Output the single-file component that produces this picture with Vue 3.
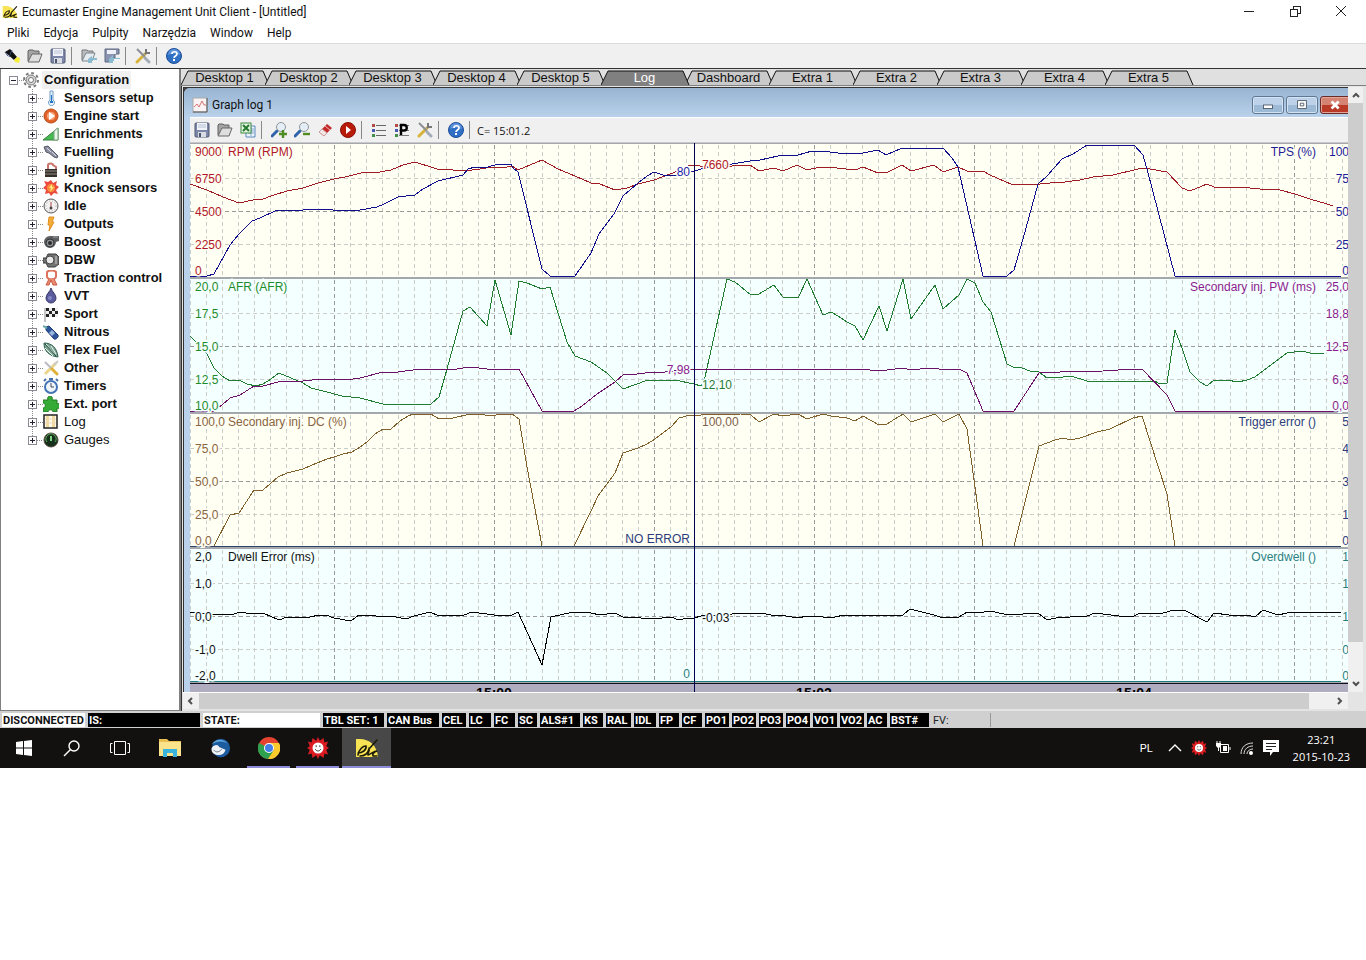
<template>
  <div class="app">
    <svg class="icon-defs" aria-hidden="true">
      <symbol id="i-logo" viewBox="0 0 24 20">
        <path d="M1 1h4c9 0 17 6 18 18H1z" fill="#f7e353" />
        <path d="M22 2l-8 9M3 17c1-6 5-9 8-9 1 4-4 7-8 7M5 18c5 0 8-3 9-7 1 2-2 5-1 6 3-1 6-4 9-4-3 1-5 3-4 5h4" fill="none" stroke="#1c1a08" stroke-width="1.6" stroke-linecap="round" />
      </symbol>
      <symbol id="i-torch" viewBox="0 0 16 16">
        <path d="M1 4l5-3 7 8-3 3z" fill="#111" />
        <path d="M1 4l3 4M8 2l-3 7" stroke="#334a77" />
        <path d="M13 9l-3 3 1 2 4 1 1-5z" fill="#f5ee35" />
      </symbol>
      <symbol id="i-open" viewBox="0 0 16 16">
        <path d="M1 13V3l1-1h4l1 1h5v3" fill="#a5a5a5" stroke="#606060" />
        <path d="M1 14L5 6h10l-3 8z" fill="#dedede" stroke="#666" stroke-linejoin="round" />
      </symbol>
      <symbol id="i-save" viewBox="0 0 16 16">
        <rect x="1" y="1" width="14" height="14" rx="1" fill="#7c86a8" stroke="#535a75" />
        <rect x="3" y="1" width="10" height="7" fill="#f1f3f8" />
        <path d="M4 3h8M4 5h8" stroke="#b8c3d8" />
        <rect x="4" y="10" width="8" height="5" fill="#d9dce2" />
        <rect x="5" y="11" width="2" height="4" fill="#4d5670" />
      </symbol>
      <symbol id="i-open-desk" viewBox="0 0 16 16">
        <path d="M1 12V2h5l1 1h5v3" fill="#b9bdc2" stroke="#777" />
        <path d="M1 13l4-8h9l-3 8z" fill="#e5ebee" stroke="#7b858b" />
        <path d="M7 15v-4l4-3v2h5v2h-5v3z" fill="#8bbbd0" />
      </symbol>
      <symbol id="i-save-desk" viewBox="0 0 16 16">
        <path d="M1 1h14v5h-4v4H8v4H1z" fill="#8a94b0" stroke="#5f6982" />
        <rect x="3" y="2" width="9" height="4" fill="#eef2f8" />
        <path d="M5 15v-4l4-4v3h7v3H9v2z" fill="#8bbbd0" />
        <path d="M10 11h6v2h-6z" fill="#f2f6f8" />
      </symbol>
      <symbol id="i-tools" viewBox="0 0 16 16">
        <path d="M2 14l8-8" stroke="#d8b43c" stroke-width="3" stroke-linecap="round" />
        <path d="M10 6l2-2M11 1v4h4" stroke="#777" stroke-width="2" fill="none" />
        <path d="M2 1l8 8" stroke="#8a8f96" stroke-width="2" />
        <path d="M10 10l4 4" stroke="#a3adb8" stroke-width="3" stroke-linecap="round" />
      </symbol>
      <symbol id="i-help" viewBox="0 0 16 16">
        <circle cx="8" cy="8" r="7.5" fill="#2f6fc4" stroke="#1f4f9a" />
        <path d="M2 7a6 6 0 0 1 12 0c-4-2-8-2-12 0z" fill="#5f93da" />
        <path d="M6 6c0-3 5-3 5 0 0 2-3 2-3 4" fill="none" stroke="#fff" stroke-width="1.7" />
        <rect x="7" y="11" width="2" height="2" fill="#fff" />
      </symbol>
      <symbol id="i-excel" viewBox="0 0 16 16">
        <path d="M6 4h9v11H6z" fill="#eef4fb" stroke="#5b87bf" />
        <path d="M8 7h6M8 9h6M8 11h6M11 5v9" stroke="#87a9d4" />
        <rect x="1" y="1" width="10" height="10" fill="#e4f3e2" stroke="#3f8a40" />
        <path d="M3 3l6 6M9 3L3 9" stroke="#247a2c" stroke-width="2" />
      </symbol>
      <symbol id="i-zoom-in" viewBox="0 0 16 16">
        <path d="M1 14l5-5" stroke="#2f62a8" stroke-width="3" stroke-linecap="round" />
        <circle cx="10" cy="5" r="4.5" fill="#e6eef5" stroke="#8d959c" />
        <path d="M12 8v8M8 12h8" stroke="#4f8c22" stroke-width="2.4" />
      </symbol>
      <symbol id="i-zoom-out" viewBox="0 0 16 16">
        <path d="M1 14l5-5" stroke="#2f62a8" stroke-width="3" stroke-linecap="round" />
        <circle cx="10" cy="5" r="4.5" fill="#e6eef5" stroke="#8d959c" />
        <path d="M9 12h7" stroke="#4f8c22" stroke-width="2.4" />
      </symbol>
      <symbol id="i-eraser" viewBox="0 0 16 16">
        <path d="M2 10l8-8 5 4-8 8z" fill="#c22a2a" />
        <path d="M2 10l3-3 5 4-3 3z" fill="#f5e8e8" stroke="#c99" />
        <path d="M8 4l5 4" stroke="#f0b8b8" />
      </symbol>
      <symbol id="i-record" viewBox="0 0 16 16">
        <circle cx="8" cy="8" r="7.5" fill="#b81b08" stroke="#8a1204" />
        <path d="M6 4l5 4-5 4z" fill="#fff" />
      </symbol>
      <symbol id="i-list" viewBox="0 0 16 16">
        <path d="M5 3.5h10M5 8.5h10M5 13.5h10" stroke="#666" />
        <path d="M1 2h3v3H1z" fill="#b34848" />
        <path d="M1 7h3v3H1z" fill="#4858b3" />
        <path d="M1 12h3v3H1z" fill="#3f8f4a" />
      </symbol>
      <symbol id="i-param" viewBox="0 0 16 16">
        <path d="M5 3.5h10M5 8.5h10M5 13.5h10" stroke="#777" />
        <path d="M1 2h3v3H1z" fill="#b34848" />
        <path d="M1 7h3v3H1z" fill="#4858b3" />
        <path d="M1 12h3v3H1z" fill="#3f8f4a" />
        <path d="M7 13V3h3a2.5 2.5 0 0 1 0 5.500H8" fill="none" stroke="#000" stroke-width="2.400" />
      </symbol>
      <symbol id="i-graph" viewBox="0 0 16 16">
        <rect x="1" y="1" width="14" height="14" fill="#fbf3f3" stroke="#aaa" />
        <path d="M15 1v14H1" fill="none" stroke="#555" />
        <path d="M2 10l3-3 2 3 3-6 2 4h2" fill="none" stroke="#d57474" />
      </symbol>
      <symbol id="i-gear" viewBox="0 0 16 16">
        <circle cx="8" cy="8" r="7" fill="none" stroke="#7b7b7b" stroke-width="2" stroke-dasharray="2.750 2.750" />
        <circle cx="8" cy="8" r="5" fill="#d6d6d6" stroke="#7b7b7b" />
        <circle cx="8" cy="8" r="2.500" fill="#fff" stroke="#777" />
      </symbol>
      <symbol id="i-thermo" viewBox="0 0 16 16">
        <path d="M7 1h3v9a3 3 0 1 1-3 0z" fill="#e6f2fc" stroke="#6a9cc8" />
        <path d="M8 5h1v6h1v2H7v-2h1z" fill="#2574c4" />
      </symbol>
      <symbol id="i-start" viewBox="0 0 16 16">
        <circle cx="8" cy="8" r="7" fill="#e2622a" stroke="#b94a18" />
        <circle cx="8" cy="8" r="4" fill="#f4a77d" />
        <path d="M6 4l6 4-6 4z" fill="#fff" />
      </symbol>
      <symbol id="i-enrich" viewBox="0 0 16 16">
        <path d="M0 14L15 2v12z" fill="#45bb50" stroke="#3b7a40" />
        <path d="M11 5l4-3v12h-4z" fill="#e9f5ea" stroke="#7aa07c" />
      </symbol>
      <symbol id="i-injector" viewBox="0 0 16 16">
        <path d="M1 3l4-1 10 10-1 2-3-1-5-4-3-1z" fill="#8c8fa0" stroke="#545868" />
        <path d="M4 4l4 4M9 8l4 4" stroke="#d5d8e4" />
      </symbol>
      <symbol id="i-coil" viewBox="0 0 16 16">
        <path d="M5 7V3c0-2 5-2 5 0l3 2v3" fill="none" stroke="#c9736b" stroke-width="2" />
        <path d="M2 7h12v8H2z" fill="#35302c" />
        <path d="M2 9h12M2 12h12" stroke="#8e897f" />
      </symbol>
      <symbol id="i-knock" viewBox="0 0 16 16">
        <path d="M8 0l2 3 4-2-1 4 3 2-3 3 2 4-4-1-3 3-2-3-4 1 1-4-3-2 3-3-2-4 4 1z" fill="#ec4a3c" />
        <circle cx="8" cy="8" r="4" fill="#f98d3c" />
        <path d="M9 4L6 8h2l-1 4 4-5H9z" fill="#ffec80" />
      </symbol>
      <symbol id="i-idle" viewBox="0 0 16 16">
        <circle cx="8" cy="8" r="7" fill="#f4f1f1" stroke="#555" />
        <circle cx="8" cy="8" r="5" fill="none" stroke="#aaa" stroke-dasharray="1 2" />
        <path d="M8 4v6" stroke="#a44" />
        <circle cx="8" cy="10" r="1.500" fill="#444" />
      </symbol>
      <symbol id="i-bolt" viewBox="0 0 16 16">
        <path d="M6 1h5L9 6h2L6 15l1-6H5z" fill="#f6ae36" stroke="#dd8f24" />
      </symbol>
      <symbol id="i-turbo" viewBox="0 0 16 16">
        <path d="M7 2h9v5l-3 1A6 6 0 1 1 7 2z" fill="#5c5f62" />
        <circle cx="7" cy="9" r="4" fill="#8f9396" stroke="#303234" />
        <circle cx="7" cy="9" r="2" fill="#2c2d2f" />
        <path d="M10 3h5" stroke="#a4a8ab" />
      </symbol>
      <symbol id="i-dbw" viewBox="0 0 16 16">
        <path d="M0 6h3l2-4h8l3 3v7l-4 3H5L3 11H0z" fill="#737373" stroke="#3c3c3c" />
        <circle cx="7" cy="8" r="4" fill="#e8e8e8" stroke="#444" />
        <path d="M13 4v8" stroke="#ccc" />
      </symbol>
      <symbol id="i-traction" viewBox="0 0 16 16">
        <path d="M4 2c2-2 7-2 9 0v5c-1 3-8 3-9 0z" fill="none" stroke="#e0735c" stroke-width="2" />
        <path d="M6 9l-3 6h3l2-5 2 5h4l-3-6" fill="#e98a72" stroke="#c85a44" />
      </symbol>
      <symbol id="i-drop" viewBox="0 0 16 16">
        <path d="M8 0c1 4 5 6 5 10a5 5 0 0 1-10 0c0-4 4-6 5-10z" fill="#5a5b9c" stroke="#3a3b68" />
        <circle cx="7" cy="10" r="2" fill="#8385c4" />
      </symbol>
      <symbol id="i-flag" viewBox="0 0 16 16">
        <path d="M2 2v14" stroke="#888" />
        <path d="M3 2h12v9H3z" fill="#eee" />
        <path d="M3 2h3v3H3zM9 2h3v3H9zM6 5h3v3H6zM12 5h3v3h-3zM3 8h3v3H3zM9 8h3v3H9z" fill="#222" />
      </symbol>
      <symbol id="i-bottle" viewBox="0 0 16 16">
        <path d="M3 3l3-1 9 9c1 2-2 5-4 4L3 6z" fill="#2d559c" stroke="#1b3a70" />
        <path d="M6 9l3-3 3 3-3 3z" fill="#9bb6de" />
        <path d="M0 2l4 2" stroke="#6aa" stroke-width="2" />
      </symbol>
      <symbol id="i-leaf" viewBox="0 0 16 16">
        <path d="M1 1c8 0 13 5 14 14C6 14 1 9 1 1z" fill="#7fa394" stroke="#2f5e4c" />
        <path d="M3 2l10 12M8 4l5 8M2 6l8 8" stroke="#e9f3ee" />
        <path d="M2 2l11 12" stroke="#1f4d3b" />
      </symbol>
      <symbol id="i-other" viewBox="0 0 16 16">
        <path d="M2 14L13 3" stroke="#ead58a" stroke-width="3" />
        <path d="M2 2l7 7" stroke="#b8bcc2" stroke-width="2" />
        <path d="M9 9l5 5" stroke="#e0b13a" stroke-width="3" stroke-linecap="round" />
        <path d="M11 5l4-4" stroke="#c9c9c9" stroke-width="2" />
      </symbol>
      <symbol id="i-timer" viewBox="0 0 16 16">
        <rect x="6" y="0" width="4" height="2" fill="#4a6fa8" />
        <path d="M1 3l2-2M15 3l-2-2" stroke="#4a6fa8" stroke-width="2" />
        <circle cx="8" cy="9" r="6" fill="#eff5fc" stroke="#4474b5" stroke-width="2" />
        <path d="M8 5v4h3" fill="none" stroke="#4c4c4c" />
      </symbol>
      <symbol id="i-puzzle" viewBox="0 0 16 16">
        <path d="M0 4h5c-1-2 0-4 2-4s3 2 2 4h5v4c2-1 3 0 3 2s-1 3-3 2v4h-4c0-3-5-3-5 0H0v-4c3 0 3-5 0-5z" fill="#35ab35" stroke="#237a25" />
      </symbol>
      <symbol id="i-log" viewBox="0 0 16 16">
        <rect x="1" y="1" width="13" height="13" fill="#fffbe8" stroke="#222" stroke-width="1.500" />
        <path d="M3 2h3v11H3zM9 2h3v11H9z" fill="#f1d9a0" />
        <path d="M2 5h11M2 9h11" stroke="#ead8c0" />
      </symbol>
      <symbol id="i-gauge" viewBox="0 0 16 16">
        <circle cx="8" cy="8" r="7" fill="#17301b" stroke="#5a4a40" />
        <path d="M4 10a5 5 0 1 1 8 0" fill="none" stroke="#5fae63" />
        <path d="M8 4v5" stroke="#7ed884" stroke-width="2" />
      </symbol>
      <symbol id="i-windows" viewBox="0 0 18 18">
        <path d="M1 3l7-1v6.500H1zM9 2l8-1v7.500H9zM1 9.500h7V16l-7-1zM9 9.500h8V17l-8-1z" fill="#fff" />
      </symbol>
      <symbol id="i-search" viewBox="0 0 18 18">
        <circle cx="11" cy="7" r="5" fill="none" stroke="#fff" stroke-width="1.400" />
        <path d="M7.500 10.500L1 17" stroke="#fff" stroke-width="1.400" />
      </symbol>
      <symbol id="i-taskview" viewBox="0 0 22 18">
        <path d="M5.500 2.500h11v13h-11zM3.500 4.500h-2v9h2M18.500 4.500h2v9h-2" fill="none" stroke="#fff" />
      </symbol>
      <symbol id="i-explorer" viewBox="0 0 22 20">
        <path d="M0 1h8l2 2h12v15H0z" fill="#e9bf51" />
        <path d="M0 4h22v14H0z" fill="#fbe38c" />
        <path d="M4 19v-8h14v8h-4v-4H8v4z" fill="#39b4dc" />
      </symbol>
      <symbol id="i-bird" viewBox="0 0 24 22">
        <circle cx="13" cy="11" r="10" fill="#1d5b9f" />
        <path d="M3 7c3-6 13-7 17-1-5-3-11-3-17 1z" fill="#5fa6dc" />
        <path d="M3 11c3-4 7-4 8-1l7 3c-1 5-6 7-11 5-3-1-5-4-4-7z" fill="#eef2f6" />
        <path d="M5 13c3 4 7 2 9-1" fill="none" stroke="#6c7784" />
      </symbol>
      <symbol id="i-chrome" viewBox="0 0 22 22">
        <circle cx="11" cy="11" r="11" fill="#e5432f" />
        <path d="M11 11L1 6a11 11 0 0 0 9 16l6-8z" fill="#2fa04e" />
        <path d="M11 6h10a11 11 0 0 1-11 16l6-9z" fill="#fbcb2d" />
        <circle cx="11" cy="11" r="5" fill="#fff" />
        <circle cx="11" cy="11" r="4" fill="#437fe6" />
      </symbol>
      <symbol id="i-sun" viewBox="0 0 24 24">
        <path d="M12 0l2 4 4-3 1 5 4-1-2 5 3 2-3 2 2 5-4-1-1 5-4-3-2 4-2-4-4 3-1-5-4 1 2-5-3-2 3-2-2-5 4 1 1-5 4 3z" fill="#da1c22" />
        <circle cx="12" cy="12" r="6" fill="#fff" />
        <path d="M10 9v2M14 9v2M9 13c1 3 5 3 6 0" fill="none" stroke="#333" />
      </symbol>
      <symbol id="i-chevron" viewBox="0 0 16 16">
        <path d="M2 11l6-6 6 6" fill="none" stroke="#fff" stroke-width="1.400" />
      </symbol>
      <symbol id="i-battery" viewBox="0 0 16 16">
        <path d="M5.500 4.500h8v8h-8zM15 7v3" fill="none" stroke="#fff" />
        <path d="M8 6h4v5H8z" fill="#fff" />
        <path d="M1 3h5v3L4 8v3H3V8L1 6z" fill="#fff" />
        <path d="M2 1v2M5 1v2" stroke="#fff" />
      </symbol>
      <symbol id="i-wifi" viewBox="0 0 16 16">
        <path d="M2 14C2 7 7 3 14 3M5 14c0-5 4-8 9-8M8 14c0-3 3-5 6-5" fill="none" stroke="#ddd" />
        <circle cx="12" cy="13" r="2" fill="#fff" />
      </symbol>
      <symbol id="i-message" viewBox="0 0 16 16">
        <path d="M0 0h16v12h-6l-3 4v-4H0z" fill="#fff" />
        <path d="M3 3.500h10M3 6.500h10M3 9.500h6" stroke="#222" />
      </symbol>
    </svg>

    <header class="titlebar">
      <svg class="title-logo"><use href="#i-logo" /></svg>
      <h1>Ecumaster Engine Management Unit Client - [Untitled]</h1>
      <div class="window-buttons">
        <button aria-label="Minimize"><svg viewBox="0 0 12 12"><path d="M1 6h10" /></svg></button>
        <button aria-label="Restore"><svg viewBox="0 0 12 12"><path d="M1 4h7v7H1zM4 4V1h7v7H8" /></svg></button>
        <button aria-label="Close"><svg viewBox="0 0 12 12"><path d="M1 1l10 10M11 1L1 11" /></svg></button>
      </div>
    </header>

    <nav class="menubar">
      <button v-for="item in menus" :key="item">{{ item }}</button>
    </nav>

    <div class="toolbar main-toolbar">
      <template v-for="(tool, i) in mainTools" :key="i">
        <span v-if="tool === '|'" class="separator"></span>
        <button v-else :aria-label="tool"><svg class="icon"><use :href="'#i-' + tool" /></svg></button>
      </template>
    </div>

    <main class="body">
      <aside class="tree">
        <div class="tree-row root">
          <button class="expander" aria-label="Collapse">
            <svg viewBox="0 0 20 18"><path class="dots" d="M10 9h10" /><path class="box" d="M2 5h8v8H2z" /><path class="sign" d="M4 9h5" /></svg>
          </button>
          <svg class="icon"><use href="#i-gear" /></svg>
          <span class="tree-label selected">Configuration</span>
        </div>
        <div v-for="(node, i) in nodes" :key="node.name" class="tree-row child">
          <button class="expander" aria-label="Expand">
            <svg viewBox="0 0 20 18">
              <path class="dots" :d="i === nodes.length - 1 ? 'M9 0v9h11' : 'M9 0v18M9 9h11'" />
              <path class="box" d="M5 5h8v8H5z" /><path class="sign" d="M7 9h5M9 7v5" />
            </svg>
          </button>
          <svg class="icon"><use :href="'#i-' + node.icon" /></svg>
          <span class="tree-label" :class="{ plain: node.plain }">{{ node.name }}</span>
        </div>
      </aside>

      <section class="workspace">
        <div class="tabs">
          <button v-for="tab in tabs" :key="tab" :class="{ active: tab === activeTab }" @click="activeTab = tab">
            <svg viewBox="0 0 90 16"><path d="M0 16L7 2h75l6 14" /></svg>
            <span>{{ tab }}</span>
          </button>
        </div>

        <div class="desk">
          <div class="desk-view">
            <div class="graph-window">
              <div class="graph-title">
                <svg class="icon"><use href="#i-graph" /></svg>
                <h2>Graph log 1</h2>
                <button aria-label="Minimize graph"><svg viewBox="0 0 32 18"><rect x="11" y="9" width="10" height="4" /></svg></button>
                <button aria-label="Restore graph"><svg viewBox="0 0 32 18"><path d="M11 4h10v9H11zM14 7h4v3h-4z" /></svg></button>
                <button class="close" aria-label="Close graph"><svg viewBox="0 0 32 18"><path class="cross" d="M11 5l8 8M19 5l-8 8" /></svg></button>
              </div>
              <div class="toolbar graph-toolbar">
                <template v-for="(tool, i) in graphTools" :key="i">
                  <span v-if="tool === '|'" class="separator"></span>
                  <button v-else :aria-label="tool"><svg class="icon"><use :href="'#i-' + tool" /></svg></button>
                </template>
                <span class="cursor-time">C= 15:01.2</span>
              </div>

              <div class="charts">
                <svg v-for="panel in panels" :key="panel.left.name" class="panel" :class="panel.tone">
                  <g class="grid">
                    <path v-for="k in 75" :key="k" :class="{ major: k % 10 === 0 }" :d="`M${(k - 1) * 16} 2v132`" />
                    <path d="M0 35h1151" />
                    <path class="major" d="M0 68h1151" />
                    <path d="M0 101h1151" />
                  </g>
                  <g class="series">
                    <polyline v-for="(s, i) in panel.series" :key="i" :points="s.points" :stroke="s.color" />
                  </g>
                  <path class="frame" d="M0 0h4000v1H0zM0 134h4000v1H0z" />
                  <g :fill="panel.left.color">
                    <text v-for="(v, i) in panel.left.scale" :key="i" x="5" :y="labelRows[i]">{{ v }}</text>
                    <text x="38" y="13">{{ panel.left.name }}</text>
                  </g>
                  <svg x="100%" class="right-axis" :fill="panel.right.color">
                    <text v-for="(v, i) in panel.right.scale" :key="i" x="1" :y="labelRows[i]">{{ v }}</text>
                    <text x="-32" y="13">{{ panel.right.name }}</text>
                  </svg>
                  <text v-for="m in panel.marks" :key="m.text" :class="{ before: m.before }" :x="m.before ? 500 : 512" :y="m.y" :fill="m.color">{{ m.text }}</text>
                  <path class="cursor" d="M504 0v135" />
                </svg>
                <svg class="time-axis">
                  <path d="M0 0h4000" />
                  <text x="304" y="15">15:00</text>
                  <text x="624" y="15">15:02</text>
                  <text x="944" y="15">15:04</text>
                  <path class="cursor" d="M504 0v9" />
                </svg>
              </div>
            </div>
          </div>

          <div class="scroll vertical">
            <button aria-label="Scroll up"><svg viewBox="0 0 16 16"><path d="M5 10l3-3 3 3" /></svg></button>
            <div class="track"><div class="thumb"></div></div>
            <button aria-label="Scroll down"><svg viewBox="0 0 16 16"><path d="M5 6l3 3 3-3" /></svg></button>
          </div>
          <div class="scroll horizontal">
            <button aria-label="Scroll left"><svg viewBox="0 0 16 16"><path d="M9 5L6 8l3 3" /></svg></button>
            <div class="track"><div class="thumb"></div></div>
            <button aria-label="Scroll right"><svg viewBox="0 0 16 16"><path d="M6 5l3 3-3 3" /></svg></button>
          </div>
        </div>
      </section>
    </main>

    <footer class="statusbar">
      <span v-for="cell in statusCells" :key="cell.text" class="cell" :class="cell.kind" :style="{ width: cell.width + 'px' }">{{ cell.text }}</span>
    </footer>

    <div class="taskbar">
      <button v-for="app in apps" :key="app.icon" :class="app.state" :aria-label="app.icon">
        <svg><use :href="'#i-' + app.icon" /></svg>
      </button>
      <div class="tray">
        <span class="lang">PL</span>
        <svg v-for="icon in ['chevron', 'sun', 'battery', 'wifi', 'message']" :key="icon"><use :href="'#i-' + icon" /></svg>
        <div class="clock"><span>23:21</span><span>2015-10-23</span></div>
      </div>
    </div>
  </div>
</template>

<script setup>
import { ref } from 'vue';

const menus = ['Pliki', 'Edycja', 'Pulpity', 'Narzędzia', 'Window', 'Help'];
const mainTools = ['torch', 'open', 'save', '|', 'open-desk', 'save-desk', '|', 'tools', '|', 'help'];
const graphTools = [
  'save', 'open', 'excel', '|', 'zoom-in', 'zoom-out', 'eraser', 'record', '|',
  'list', 'param', 'tools', '|', 'help', '|'
];

const nodes = [
  { name: 'Sensors setup', icon: 'thermo' },
  { name: 'Engine start', icon: 'start' },
  { name: 'Enrichments', icon: 'enrich' },
  { name: 'Fuelling', icon: 'injector' },
  { name: 'Ignition', icon: 'coil' },
  { name: 'Knock sensors', icon: 'knock' },
  { name: 'Idle', icon: 'idle' },
  { name: 'Outputs', icon: 'bolt' },
  { name: 'Boost', icon: 'turbo' },
  { name: 'DBW', icon: 'dbw' },
  { name: 'Traction control', icon: 'traction' },
  { name: 'VVT', icon: 'drop' },
  { name: 'Sport', icon: 'flag' },
  { name: 'Nitrous', icon: 'bottle' },
  { name: 'Flex Fuel', icon: 'leaf' },
  { name: 'Other', icon: 'other' },
  { name: 'Timers', icon: 'timer' },
  { name: 'Ext. port', icon: 'puzzle' },
  { name: 'Log', icon: 'log', plain: true },
  { name: 'Gauges', icon: 'gauge', plain: true }
];

const tabs = [
  'Desktop 1', 'Desktop 2', 'Desktop 3', 'Desktop 4', 'Desktop 5', 'Log',
  'Dashboard', 'Extra 1', 'Extra 2', 'Extra 3', 'Extra 4', 'Extra 5'
];
const activeTab = ref('Log');

// baselines of the five scale values in a panel
const labelRows = [13, 40, 73, 106, 132];

const rpm = '0,41 17,47 33,54 49,60 63,57 73,56 81,53 97,48 113,45 128,40 144,36 155,34 171,30 190,29 201,27 213,22 225,19 247,26 263,27 275,28 290,26 303,24 317,24 322,23 328,27 352,17 368,26 385,33 401,40 410,41 425,47 437,45 448,41 464,37 483,30 500,22 510,23 542,23 560,22 569,28 584,25 593,28 607,22 617,27 630,24 647,25 665,27 673,24 688,30 698,29 712,22 721,28 744,22 753,29 768,24 777,28 793,28 800,32 823,42 828,41 850,41 860,40 875,39 890,37 903,34 923,32 944,27 952,25 960,26 977,29 992,45 1000,48 1017,41 1024,44 1050,44 1070,46 1090,47 1105,51 1120,56 1137,61 1143,63';
const tps = '0,133 17,133 24,131 40,102 49,91 62,78 70,75 87,67 113,67 118,66 133,66 143,67 170,67 187,64 194,61 208,54 225,52 233,46 248,38 273,32 278,26 285,24 298,24 308,21 321,21 323,25 328,29 352,126 360,133 385,133 401,110 409,91 424,71 433,53 448,40 457,33 464,29 473,32 482,33 501,29 505,28 511,26 542,21 560,18 570,17 588,13 608,12 622,8 632,8 648,10 662,11 673,10 688,7 696,12 712,5 753,5 762,15 768,24 793,133 817,133 824,127 833,96 848,41 857,33 872,16 883,11 897,2 944,2 953,12 957,26 985,133 1151,133';
const afr = '0,58 4,62 17,76 24,90 32,98 40,103 49,102 57,106 66,108 73,106 81,101 89,95 113,105 121,110 133,113 152,118 170,120 193,126 241,126 249,119 257,91 273,33 280,29 297,48 305,2 321,57 329,3 337,5 352,11 360,9 377,64 385,78 401,84 417,95 433,111 458,102 485,102 504,106 511,108 515,99 537,1 545,4 561,17 569,16 584,7 593,19 608,20 617,1 633,37 641,34 648,38 657,44 665,48 673,62 689,28 697,53 713,1 721,41 745,7 753,31 769,17 777,1 785,5 793,24 801,34 817,86 823,89 832,90 840,93 849,94 857,100 865,99 873,99 881,98 897,103 965,103 968,105 977,105 985,52 992,70 1000,94 1010,104 1017,108 1024,102 1037,102 1048,104 1057,102 1065,99 1081,87 1097,75 1112,73 1120,75 1134,75';
const pulseWidth = '0,133 24,133 32,127 40,120 50,117 64,108 73,108 88,104 97,103 113,103 122,102 133,101 163,101 170,100 193,94 200,95 223,92 241,91 250,92 267,91 280,89 297,91 329,91 352,133 384,133 392,128 407,116 425,104 433,97 447,96 463,94 475,94 502,91 565,91 569,92 573,91 657,91 665,92 673,91 680,92 697,92 705,91 713,90 721,92 730,91 745,90 753,92 769,91 777,95 793,133 824,133 849,95 870,94 913,93 943,91 952,91 977,117 985,133 1151,133';
const dutyCycle = '24,133 40,102 49,100 64,77 73,77 88,64 97,60 113,56 122,52 137,46 144,44 153,41 162,39 170,34 177,29 185,21 193,16 201,16 210,8 218,3 223,1 241,1 249,6 263,5 280,1 290,1 300,3 312,1 322,1 329,6 337,54 352,133 384,133 401,98 408,83 425,60 433,40 448,35 457,31 465,26 481,14 489,5 500,2 511,2 551,1 561,2 569,9 584,1 593,3 608,1 617,6 633,1 641,3 657,5 665,8 673,3 689,12 697,11 713,1 721,9 730,6 745,1 753,9 769,1 777,16 785,74 793,133 824,133 849,33 865,27 873,25 881,27 890,25 907,19 920,16 943,5 952,3 977,81 985,133';
const dwell = '0,64 22,66 42,67 49,64 63,66 73,65 89,72 97,69 120,69 129,67 136,67 144,70 161,73 169,67 186,68 206,69 216,71 224,68 240,64 249,68 274,67 282,64 304,67 320,68 328,64 352,117 361,69 374,66 385,64 401,65 410,67 425,65 433,69 451,70 464,71 481,69 489,72 497,70 504,70 511,68 542,66 557,65 571,65 581,67 596,68 608,70 617,68 627,68 633,69 645,69 654,67 713,67 720,61 744,67 753,70 769,69 777,64 794,64 800,63 814,66 833,66 848,65 857,72 870,69 880,69 886,68 897,68 905,65 921,67 929,68 944,68 950,65 973,65 984,62 996,63 1017,74 1024,65 1039,67 1057,67 1065,69 1073,62 1088,67 1097,65 1109,64 1151,64';
const baseline = '0,133 1151,133';

const panels = [
  {
    tone: 'cream',
    left: { name: 'RPM (RPM)', color: '#b01828', scale: ['9000', '6750', '4500', '2250', '0'] },
    right: { name: 'TPS (%)', color: '#1c1c96', scale: ['100', '75', '50', '25', '0'] },
    series: [{ points: rpm, color: '#a01c24' }, { points: tps, color: '#10108c' }],
    marks: [
      { text: '80', y: 33, color: '#1c1cb0', before: true },
      { text: '7660', y: 26, color: '#b01828' }
    ]
  },
  {
    tone: 'azure',
    left: { name: 'AFR (AFR)', color: '#1f8c2c', scale: ['20,0', '17,5', '15,0', '12,5', '10,0'] },
    right: { name: 'Secondary inj. PW (ms)', color: '#8c1c8c', scale: ['25,0', '18,8', '12,5', '6,3', '0,0'] },
    series: [{ points: afr, color: '#1f7c30' }, { points: pulseWidth, color: '#6c1068' }],
    marks: [
      { text: '7,98', y: 96, color: '#8c1c8c', before: true },
      { text: '12,10', y: 111, color: '#2a7a34' }
    ]
  },
  {
    tone: 'cream',
    left: { name: 'Secondary inj. DC (%)', color: '#8a6440', scale: ['100,0', '75,0', '50,0', '25,0', '0,0'] },
    right: { name: 'Trigger error ()', color: '#2c3c7c', scale: ['5', '4', '3', '1', '0'] },
    series: [{ points: dutyCycle, color: '#80602c' }, { points: baseline, color: '#2c4468' }],
    marks: [
      { text: 'NO ERROR', y: 130, color: '#2c3c7c', before: true },
      { text: '100,00', y: 13, color: '#80604c' }
    ]
  },
  {
    tone: 'azure',
    left: { name: 'Dwell Error (ms)', color: '#111', scale: ['2,0', '1,0', '0,0', '-1,0', '-2,0'] },
    right: { name: 'Overdwell ()', color: '#2c8080', scale: ['1', '1', '1', '0', '0'] },
    series: [{ points: baseline, color: '#207c80' }, { points: dwell, color: '#000' }],
    marks: [
      { text: '0', y: 130, color: '#2c8080', before: true },
      { text: '-0,03', y: 74, color: '#111' }
    ]
  }
];

const statusCells = [
  { text: 'DISCONNECTED', kind: 'light', width: 86 },
  { text: 'IS:', width: 115 },
  { text: 'STATE:', kind: 'light', width: 120 },
  { text: 'TBL SET: 1', width: 64 },
  { text: 'CAN Bus', width: 55 },
  { text: 'CEL', width: 27 },
  { text: 'LC', width: 25 },
  { text: 'FC', width: 24 },
  { text: 'SC', width: 22 },
  { text: 'ALS#1', width: 43 },
  { text: 'KS', width: 23 },
  { text: 'RAL', width: 28 },
  { text: 'IDL', width: 25 },
  { text: 'FP', width: 23 },
  { text: 'CF', width: 23 },
  { text: 'PO1', width: 27 },
  { text: 'PO2', width: 27 },
  { text: 'PO3', width: 27 },
  { text: 'PO4', width: 27 },
  { text: 'VO1', width: 27 },
  { text: 'VO2', width: 27 },
  { text: 'AC', width: 23 },
  { text: 'BST#', width: 42 },
  { text: 'FV:', kind: 'flat', width: 59 }
];

const apps = [
  { icon: 'windows' },
  { icon: 'search' },
  { icon: 'taskview' },
  { icon: 'explorer' },
  { icon: 'bird' },
  { icon: 'chrome', state: 'running' },
  { icon: 'sun', state: 'running' },
  { icon: 'logo', state: 'running current' }
];
</script>

<style>
body {
  margin: 0;
  background: #fff;
}
</style>

<style scoped>
.app {
  font-family: Roboto, "Noto Sans", sans-serif;
  font-size: 12px;
  color: #111;
}

.icon-defs {
  position: absolute;
  width: 0;
  height: 0;
}

button {
  padding: 0;
  border: 0;
  background: none;
  font: inherit;
  color: inherit;
}

.icon {
  display: block;
  flex: none;
  width: 16px;
  height: 16px;
}

.titlebar {
  display: flex;
  align-items: center;
  height: 24px;
  padding: 0 2px;
}

.title-logo {
  width: 16px;
  height: 14px;
  margin-right: 4px;
}

.titlebar h1 {
  flex: 1;
  margin: 0;
  font-size: 12px;
  font-weight: normal;
}

.window-buttons {
  display: flex;
  height: 20px;
}

.window-buttons button {
  width: 46px;
}

.window-buttons svg {
  width: 12px;
  height: 12px;
  fill: none;
  stroke: #222;
  shape-rendering: crispEdges;
}

.menubar {
  display: flex;
  gap: 14px;
  height: 19px;
  padding: 0 7px;
  line-height: 19px;
}

.toolbar {
  display: flex;
  align-items: center;
  height: 24px;
  background: #f0f0f0;
}

.toolbar button {
  display: flex;
  justify-content: center;
  width: 23px;
}

.separator {
  width: 1px;
  height: 18px;
  margin: 0 5px 0 2px;
  background: #888;
}

.main-toolbar {
  border-top: 1px solid #dcdcdc;
  border-bottom: 1px solid #333;
}

.body {
  display: flex;
}

.tree {
  flex: none;
  box-sizing: border-box;
  width: 181px;
  padding-top: 2px;
  border: solid #808080;
  border-width: 0 2px 1px 1px;
  font: bold 13px/18px "Liberation Sans", Arial, sans-serif;
}

.tree-row {
  display: flex;
  align-items: center;
  height: 18px;
}

.root {
  padding-left: 6px;
}

.root .icon {
  margin: 0 3px 0 -4px;
}

.child {
  padding-left: 22px;
}

.child .icon {
  margin-right: 3px;
}

.expander,
.expander svg {
  display: block;
  width: 20px;
  height: 18px;
}

.expander path {
  fill: none;
  stroke: #444;
  shape-rendering: crispEdges;
}

.expander .dots {
  stroke: #888;
  stroke-dasharray: 1 1;
}

.expander .box {
  fill: #fff;
  stroke: #8a8a94;
}

.expander .sign {
  stroke: #223;
}

.tree-label {
  padding: 0 2px;
}

.tree-label.selected {
  background: #f0f0f0;
}

.tree-label.plain {
  font-weight: normal;
}

.workspace {
  flex: 1;
  min-width: 0;
}

.tabs {
  display: flex;
  height: 16px;
  overflow: hidden;
  background: #e0e0e0;
  border-bottom: 1px solid #808080;
  font: 13px/18px "Liberation Sans", Arial, sans-serif;
}

.tabs button {
  position: relative;
  flex: none;
  width: 90px;
  height: 16px;
  margin-right: -6px;
}

.tabs svg {
  position: absolute;
  top: 0;
  left: 0;
  width: 90px;
  height: 16px;
  fill: #cacaca;
  stroke: #111;
}

.tabs span {
  position: relative;
  padding-right: 3px;
}

.tabs .active {
  z-index: 1;
  color: #fff;
}

.tabs .active svg {
  fill: #808080;
}

.desk {
  display: grid;
  grid-template-columns: 1fr 15px;
  padding: 1px 3px 2px 1px;
  border-left: 1px solid #333;
  background: #e4e4e4;
}

.desk-view {
  min-width: 0;
  overflow: hidden;
  border-top: 1px solid #333;
  border-left: 1px solid #333;
  background: #444;
}

.graph-window {
  padding-left: 6px;
  border-radius: 6px 0 0 0;
  background: #b9d1ea;
}

.graph-title {
  display: flex;
  align-items: center;
  gap: 2px;
  height: 29px;
  margin-left: -6px;
  margin-right: -4px;
  padding-left: 8px;
  border-radius: 6px 0 0 0;
  background: linear-gradient(#98b4d2, #b9d1ea);
  overflow: hidden;
}

.graph-title h2 {
  flex: 1;
  margin: 0 0 0 2px;
  padding-top: 4px;
  font-size: 12px;
  font-weight: normal;
}

.graph-title .icon {
  margin-top: 4px;
}

.graph-title button {
  box-sizing: border-box;
  width: 32px;
  height: 18px;
  margin-top: 4px;
  border: 1px solid #5f7894;
  border-radius: 3px;
  box-shadow: inset 0 0 0 1px #d5e4f3;
  background: linear-gradient(#bdd2e8 50%, #9cb9d6 50%);
}

.graph-title button svg {
  display: block;
  width: 30px;
  height: 16px;
  fill: #fff;
  stroke: #4c5866;
}

.graph-title .close {
  border-color: #6c2a24;
  box-shadow: inset 0 0 0 1px #e2a79c;
  background: linear-gradient(#d58474 50%, #b93a26 50%);
}

.graph-title .cross {
  stroke: #fff;
  stroke-width: 3;
}

.graph-toolbar {
  border-top: 1px solid #fff;
  border-bottom: 1px solid #c8c8c8;
}

.cursor-time {
  margin-left: 2px;
  font-family: "Open Sans", "Noto Sans", sans-serif;
  font-size: 11px;
}

.charts {
  display: flex;
  flex-direction: column;
}

.panel {
  display: block;
  width: 100%;
  height: 135px;
  overflow: hidden;
  font: 12px "Liberation Sans", Arial, sans-serif;
}

.panel text {
  stroke-width: 3px;
  paint-order: stroke;
}

.cream {
  background: #fffff4;
}

.cream text {
  stroke: #fffff4;
}

.azure {
  background: #f4ffff;
}

.azure text {
  stroke: #f4ffff;
}

.grid path {
  stroke: #ccccc8;
  stroke-dasharray: 4 3;
  shape-rendering: crispEdges;
}

.grid .major {
  stroke: #999;
}

.series polyline {
  fill: none;
  shape-rendering: crispEdges;
}

.frame {
  fill: #a4a8ac;
}

.right-axis {
  overflow: visible;
  text-anchor: end;
}

.before {
  text-anchor: end;
}

.cursor {
  stroke: #000050;
  shape-rendering: crispEdges;
}

.time-axis {
  display: block;
  width: 100%;
  height: 9px;
  overflow: hidden;
  background: #b0adc0;
  font: bold 14px "Liberation Sans", Arial, sans-serif;
  text-anchor: middle;
}

.time-axis path {
  stroke: #112;
  stroke-width: 2;
}

.time-axis .cursor {
  stroke: #000050;
  stroke-width: 1;
}

.scroll {
  display: flex;
  background: #f0f0f0;
}

.scroll.vertical {
  flex-direction: column;
}

.scroll.horizontal {
  border-top: 1px solid #fff;
}

.scroll button,
.scroll svg {
  display: block;
  width: 16px;
  height: 16px;
}

.scroll.vertical button {
  width: 15px;
}

.scroll path {
  fill: none;
  stroke: #505050;
  stroke-width: 2;
}

.track {
  flex: 1;
}

.thumb {
  background: #cdcdcd;
}

.vertical .thumb {
  height: 94%;
}

.horizontal .thumb {
  width: 98%;
  height: 16px;
}

.statusbar {
  display: flex;
  height: 14px;
  padding: 2px 2px 1px;
  background: #d0d0d0;
  font: bold 11px/15px Roboto, "Noto Sans", sans-serif;
}

.cell {
  flex: none;
  box-sizing: border-box;
  padding-left: 1px;
  border-right: 3px solid #d0d0d0;
  background: #000;
  color: #fff;
  white-space: nowrap;
  overflow: hidden;
}

.cell.light {
  background: #fff;
  color: #111;
}

.cell.flat {
  border-right: 1px solid #999;
  background: none;
  color: #222;
  font-weight: normal;
}

.taskbar {
  display: flex;
  height: 40px;
  background: #131110;
  color: #fff;
}

.taskbar button {
  display: flex;
  align-items: center;
  justify-content: center;
  box-sizing: border-box;
  width: 49px;
  padding-top: 2px;
  border-bottom: 2px solid transparent;
}

.taskbar button svg {
  width: 22px;
  height: 22px;
}

.taskbar button:nth-child(-n + 3) {
  width: 48px;
}

.taskbar button:nth-child(4) {
  width: 51px;
}

.taskbar button:nth-child(-n + 3) svg {
  width: 22px;
  height: 18px;
}

.taskbar .running {
  border-image: linear-gradient(90deg, transparent 10%, #8c8cd8 10% 90%, transparent 90%) 2;
}

.taskbar .current {
  border-image: none;
  border-color: #8c8cd8;
  background: #484848;
}

.taskbar .current svg {
  width: 24px;
}

.tray {
  display: flex;
  align-items: center;
  gap: 8px;
  margin-left: auto;
  padding-right: 16px;
}

.tray svg {
  width: 16px;
  height: 16px;
}

.lang {
  margin-right: 6px;
  font-size: 11px;
}

.clock {
  display: flex;
  flex-direction: column;
  align-items: center;
  margin-left: 6px;
  font: 11px/17px "Open Sans", "Noto Sans", sans-serif;
}
</style>
